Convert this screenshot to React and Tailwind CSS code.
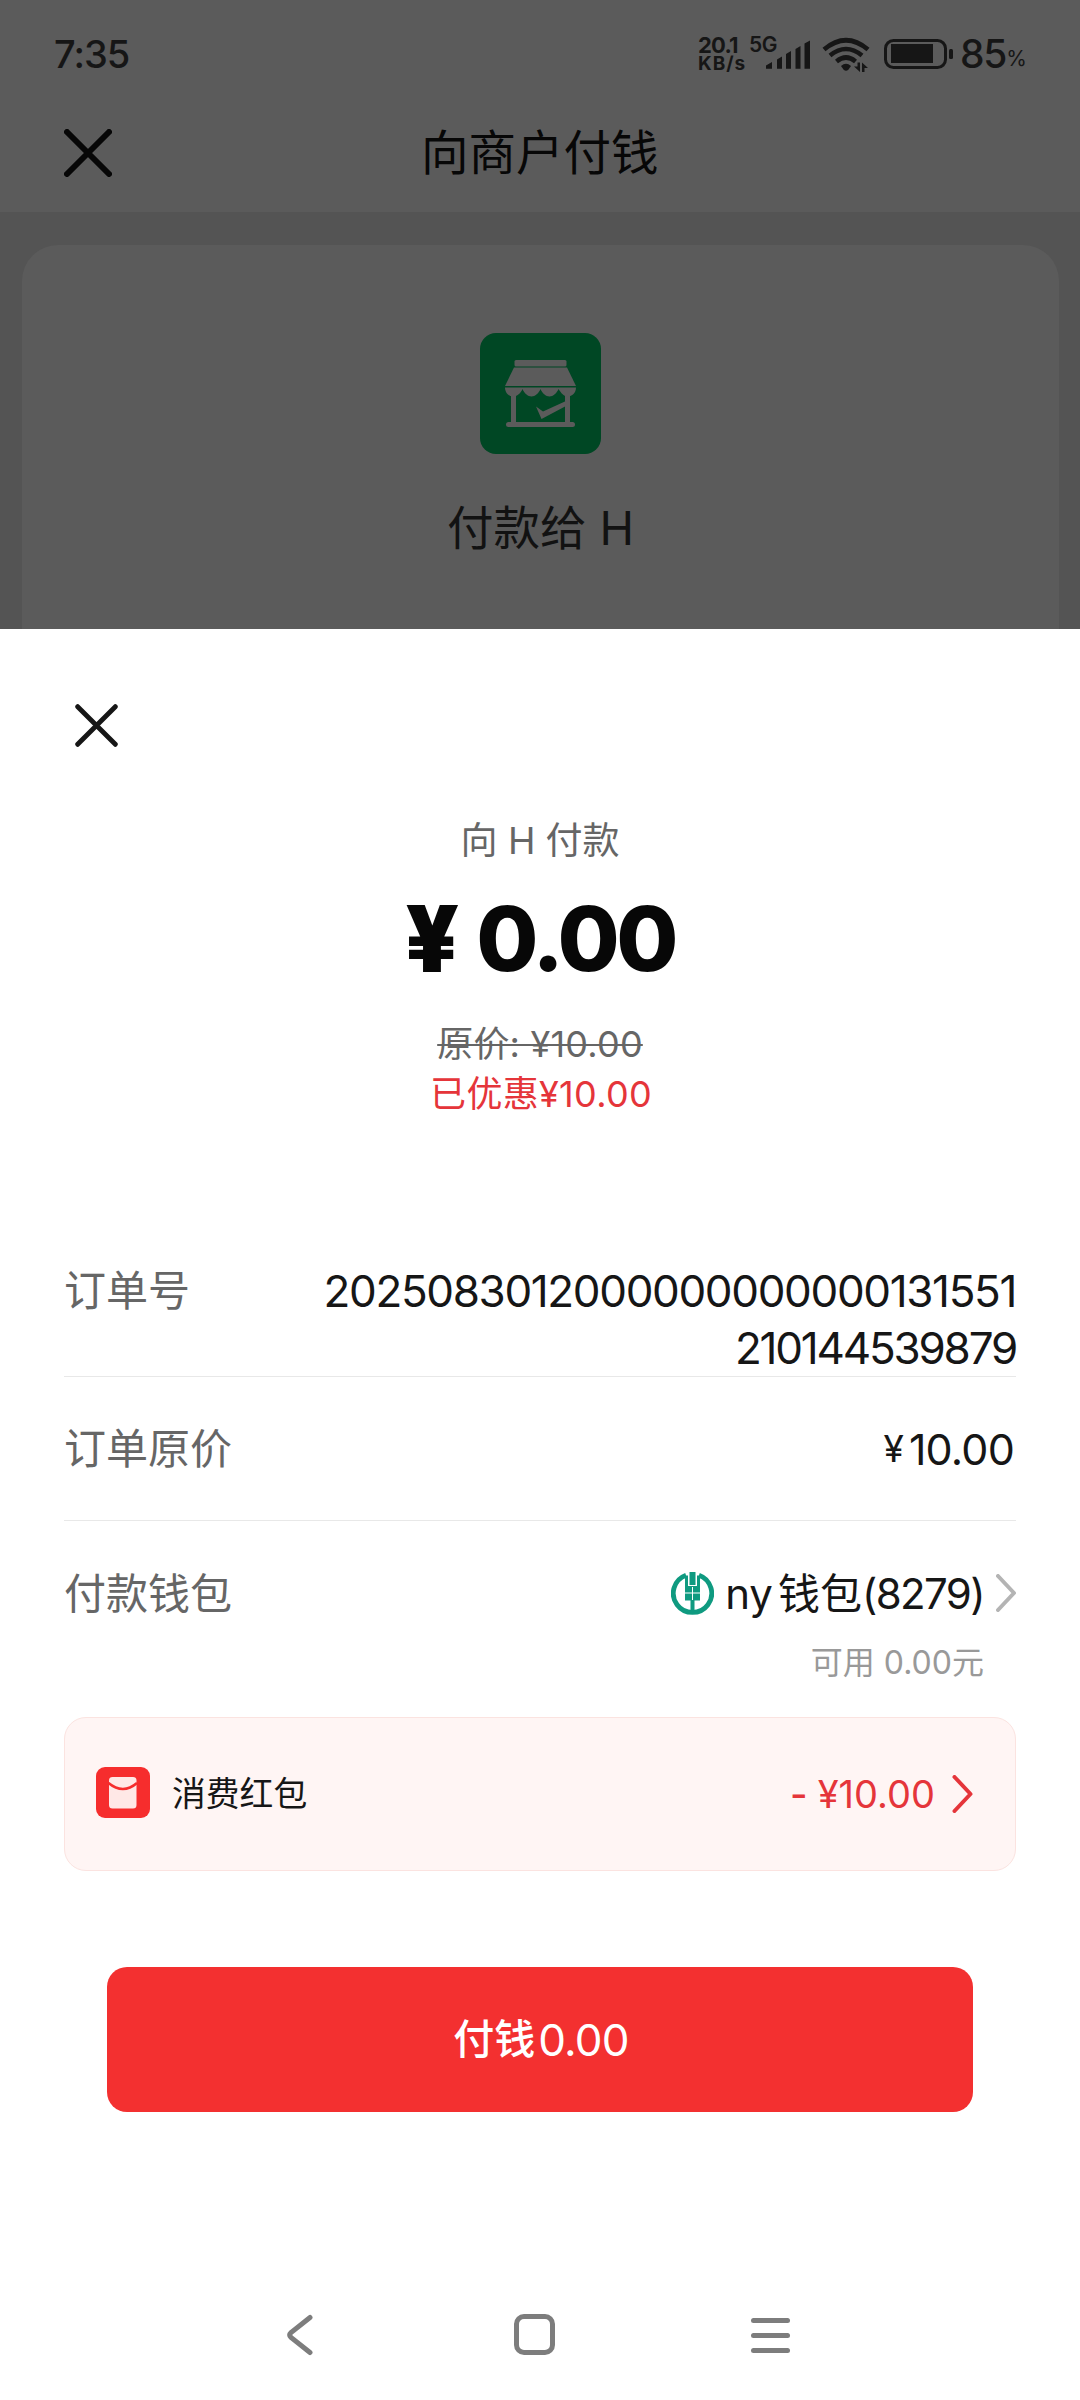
const fontStack = "font-['Inter','Noto_Sans_CJK_SC',sans-serif]"

function CloseIcon({ className, width }) {
  return (
    <svg className={className} viewBox="0 0 48 48" fill="none" stroke="currentColor" strokeWidth={width} strokeLinecap="round">
      <path d="M3 3 45 45M45 3 3 45" />
    </svg>
  )
}

function Chevron({ className }) {
  return (
    <svg className={className} viewBox="0 0 20 38" fill="none" stroke="currentColor" strokeWidth="4" strokeLinecap="round" strokeLinejoin="round">
      <path d="M2 2 18 19 2 36" />
    </svg>
  )
}

function StatusBar() {
  return (
    <div className="flex h-[108px] items-center pl-[54px] text-[#161616]">
      <span className="w-[644px] text-[38px] font-medium tracking-[-1px]">7:35</span>
      <div className="flex w-[51px] flex-col font-bold">
        <span className="text-[22px] leading-[20px] tracking-[-0.800px]">20.1</span>
        <span className="text-[19px] leading-[18px] tracking-[1px]">KB/s</span>
      </div>
      <div className="flex w-[17px] self-start pt-[35px] text-[21px] font-semibold leading-[20px] tracking-[-0.500px]">5G</div>
      <svg className="h-[40px] w-[190px] shrink-0" viewBox="766 34 190 40" fill="currentColor">
        <path d="M766 65.5 772 62V68.7H766ZM777 59.5 782 56.5V68.7H777ZM786 54 791 51V68.7H786ZM795.500 49 800.500 46V68.700H795.500ZM804.500 43.500 810 40.500V68.700H804.500Z" />
        <g fill="none" stroke="currentColor" strokeWidth="4.6">
          <path d="M824 49.500Q846 31 868 49.500" />
          <path d="M830 55.500Q846 42.500 862 55.500" />
          <path d="M836.500 61.500Q846 53.500 855.500 61.500" />
        </g>
        <path d="M841 66Q846 61.500 851 66L848.500 69.500Q846 72 843.500 69.500Z" />
        <path d="M857.500 62.500H860V72L854 66.500H857.500ZM862 72V62.500L868 68H864.500V72Z" />
        <rect x="885.500" y="40.500" width="60" height="27" rx="8" fill="none" stroke="currentColor" strokeWidth="3" />
        <rect x="891" y="44" width="42" height="19" />
        <rect x="949" y="49" width="4" height="10" rx="1.500" />
      </svg>
      <span className="ml-[4px] text-[39px] font-medium tracking-[-1.2px]">85</span>
      <span className="mt-[10px] text-[21px] leading-[22px]">%</span>
    </div>
  )
}

function ShopIcon() {
  return (
    <svg className="size-[121px]" viewBox="0 0 121 121">
      <rect width="121" height="121" rx="16" fill="#004724" />
      <g fill="#5b5b5b">
        <rect x="34.500" y="27" width="52" height="6.500" rx="1.500" />
        <path d="M34 34.500H87L96 53H25Z" />
        <path d="M25 54.500H96C96 60 92 63.500 88 63.500S81 60 78.500 56C77 60 73 63.500 69.500 63.500S62 60 60.500 56C59 60 55 63.500 51.500 63.500S44 60 42.500 56C41 60 37 63.500 33 63.500S25 60 25 54.500Z" />
        <rect x="31" y="60" width="5" height="30" />
        <rect x="85" y="60" width="5" height="30" />
        <rect x="26" y="89" width="69" height="5" rx="2.500" />
        <path d="M56 73.500 63 78.500 86 68V73L61.500 86Z" />
      </g>
    </svg>
  )
}

function BankLogo() {
  return (
    <svg className="size-[43px]" viewBox="0 0 43 43">
      <path d="M15 3.200A19.200 19.200 0 1 0 28 3.200" fill="none" stroke="#0f9a80" strokeWidth="4.800" />
      <path d="M14 3.500V28.500H19.500V39H23.500V28.500H29V3.500H26V14H17V3.500Z" fill="#0f9a80" />
      <rect x="18.500" y="0" width="6" height="13" fill="#0f9a80" />
      <path d="M14 21H29M21.500 15V28" stroke="#fff" strokeWidth="1" />
    </svg>
  )
}

function RedPacketIcon() {
  return (
    <svg className="mb-[3px] h-[51px] w-[54px]" viewBox="0 0 54 51">
      <rect width="54" height="51" rx="9" fill="#f62d2d" />
      <rect x="13" y="10" width="27.500" height="31.500" rx="3.500" fill="#ffe8e6" />
      <path d="M12.500 16Q27 28 41 16" fill="none" stroke="#f62d2d" strokeWidth="2.600" />
    </svg>
  )
}

function NavBar() {
  return (
    <div className="mt-auto flex h-[130px] items-center pl-[286px] text-[#7d7d7d]">
      <svg className="h-[42px] w-[28px]" viewBox="0 0 28 42" fill="none" stroke="currentColor" strokeWidth="5" strokeLinecap="round">
        <path d="M24 3.500 5 18.500Q2.500 21 5 23.500L24 38.500" />
      </svg>
      <div className="mb-px ml-[200px] size-[41px] rounded-[10px] border-[5px] border-current" />
      <div className="ml-[196px] flex w-[39px] flex-col gap-[10px]">
        <div className="h-[5px] rounded-full bg-current" />
        <div className="h-[5px] rounded-full bg-current" />
        <div className="h-[5px] rounded-full bg-current" />
      </div>
    </div>
  )
}

function PaySheet() {
  return (
    <div className="flex h-[1771px] flex-col bg-white">
      <CloseIcon className="ml-[75px] mt-[75px] size-[43px] text-[#161616]" width={5.4} />

      <div className="mt-[73px] flex flex-col items-center whitespace-pre">
        <div className="text-[37px] leading-[42px] text-[#666]">向 <span className="tracking-[-0.500px]">H</span> 付款</div>
        <div className="mt-[37px] flex h-[80px] items-center gap-[20px] text-[90px] font-extrabold leading-[80px] text-[#070707]">
          <span className="text-[92px] font-black tracking-[-3px]">¥</span>
          <span className="tracking-[-3.600px]">0.00</span>
        </div>
        <div className="mt-[40px] text-[36px] leading-[50px] tracking-[0.200px] text-[#666] line-through decoration-2">原价: ¥10.00</div>
        <div className="pl-[2px] text-[36px] leading-[50px] tracking-[0.300px] text-[#e5353a]">已优惠¥10.00</div>
      </div>

      <div className="mx-[64px] mt-[143px] text-[42px] text-[#161616]">
        <div className="flex justify-between border-b border-[#e8e8e8] leading-[57px]">
          <span className="text-[#666]">订单号</span>
          <div className="h-[114px] pt-px text-right text-[44px]">
            <div className="tracking-[-1.350px]">2025083012000000000000131551</div>
            <div className="tracking-[-2.200px]">210144539879</div>
          </div>
        </div>
        <div className="flex h-[144px] items-center justify-between border-b border-[#e8e8e8]">
          <span className="text-[#666]">订单原价</span>
          <div className="mr-[2px] flex items-center gap-[5px] pt-px">
            <span className="text-[37px]">¥</span>
            <span className="text-[43px] tracking-[-0.800px]">10.00</span>
          </div>
        </div>
        <div className="mt-[42px] flex h-[60px] items-center justify-between">
          <span className="text-[#666]">付款钱包</span>
          <div className="flex items-center">
            <BankLogo />
            <span className="ml-[11px]">ny</span>
            <span className="ml-[5px]">钱包</span>
            <span className="tracking-[-1.600px]">(8279)</span>
            <Chevron className="ml-[12px] h-[38px] w-[20px] text-[#b4b4b4]" />
          </div>
        </div>
        <div className="mr-[32px] mt-[20px] whitespace-pre text-right text-[32px] leading-[40px] text-[#999]">可用 0.00元</div>
      </div>

      <div className="mx-[64px] mt-[34px] flex h-[154px] items-center rounded-[22px] border border-[#fbe3e0] bg-[#fff5f4] pl-[31px] pr-[42px]">
        <RedPacketIcon />
        <span className="ml-[22px] text-[33.800px] text-[#161616]">消费红包</span>
        <div className="ml-auto flex items-center whitespace-pre text-[38px] text-[#e5353a]">
          <span className="font-medium">- </span>
          <span>¥10.00</span>
          <Chevron className="ml-[17px] h-[38px] w-[21px]" />
        </div>
      </div>

      <button className="mx-[107px] mt-[96px] flex h-[145px] items-center justify-center gap-[3px] rounded-[20px] bg-[#f33030] pl-[2px] text-white">
        <span className="text-[41px] font-medium">付钱</span>
        <span className="text-[44px] tracking-[-0.800px]">0.00</span>
      </button>

      <NavBar />
    </div>
  )
}

export default function App() {
  return (
    <div className={`flex h-[2400px] w-[1080px] flex-col overflow-hidden bg-[#5b5b5b] ${fontStack}`}>
      <StatusBar />
      <div className="flex h-[104px] items-center pb-[14px] pl-[64px]">
        <CloseIcon className="size-[48px] text-[#070707]" width={6} />
        <h1 className="ml-[309px] text-[47.500px] leading-[60px] text-[#070707]">向商户付钱</h1>
      </div>
      <div className="h-[417px] bg-[#545454] pl-[22px] pr-[21px] pt-[33px]">
        <div className="flex h-full flex-col items-center rounded-t-[36px] bg-[#5b5b5b] pt-[88px]">
          <ShopIcon />
          <span className="mt-[44px] whitespace-pre text-[46.500px] leading-[60px] text-[#121212]">付款给 H</span>
        </div>
      </div>
      <PaySheet />
    </div>
  )
}
